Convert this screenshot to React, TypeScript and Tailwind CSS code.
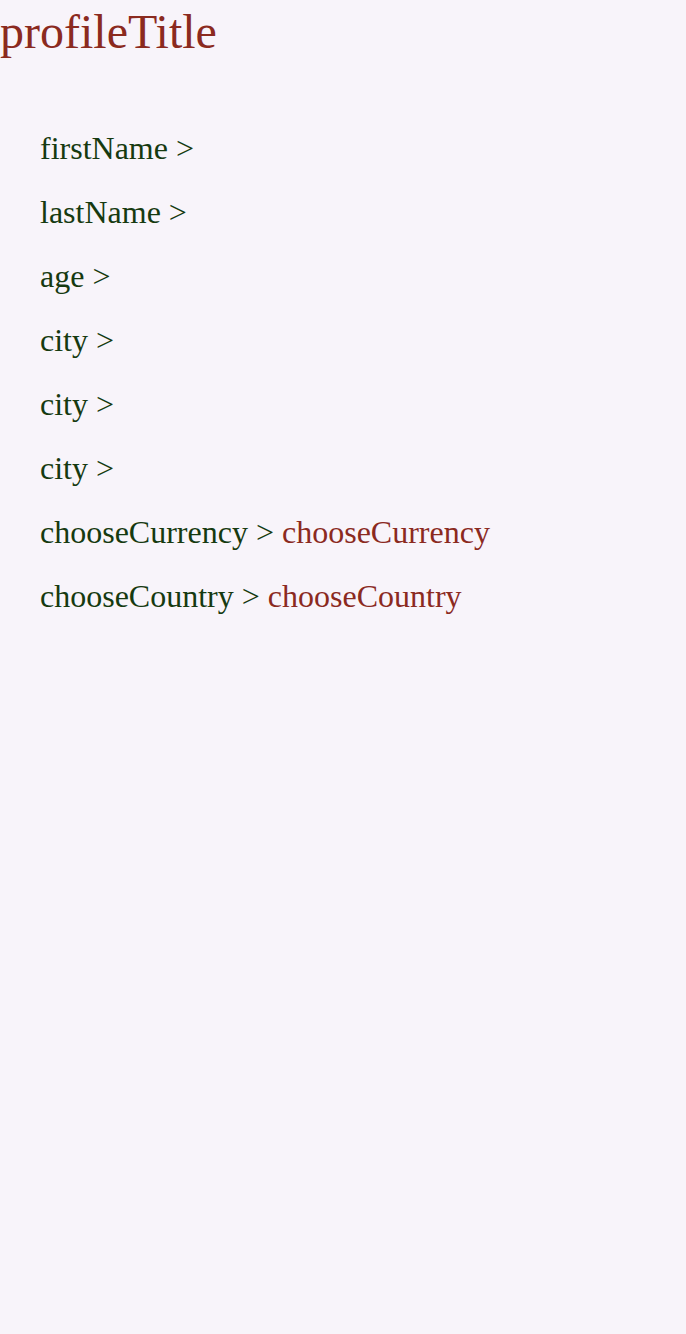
const fields = [
  { label: 'firstName', value: '' },
  { label: 'lastName', value: '' },
  { label: 'age', value: '' },
  { label: 'city', value: '' },
  { label: 'city', value: '' },
  { label: 'city', value: '' },
  { label: 'chooseCurrency', value: 'chooseCurrency' },
  { label: 'chooseCountry', value: 'chooseCountry' },
];

const App = () => {
  return (
    <div className="min-h-[1334px] w-full bg-[#f8f4fa] font-['Liberation_Serif',serif]">
      <h1 className="pt-[4px] text-[48px] leading-[55px] text-[#8b2a1f]">profileTitle</h1>
      <div className="mt-[57px] flex flex-col pl-[40px]">
        {fields.map((item, i) => (
          <div key={i} className="h-[64px] text-[32px] leading-[64px] whitespace-nowrap">
            <span className="text-[#163a10]">{item.label} &gt;</span>
            {item.value && <span className="text-[#8b2a1f]"> {item.value}</span>}
          </div>
        ))}
      </div>
    </div>
  );
};

export default App;
